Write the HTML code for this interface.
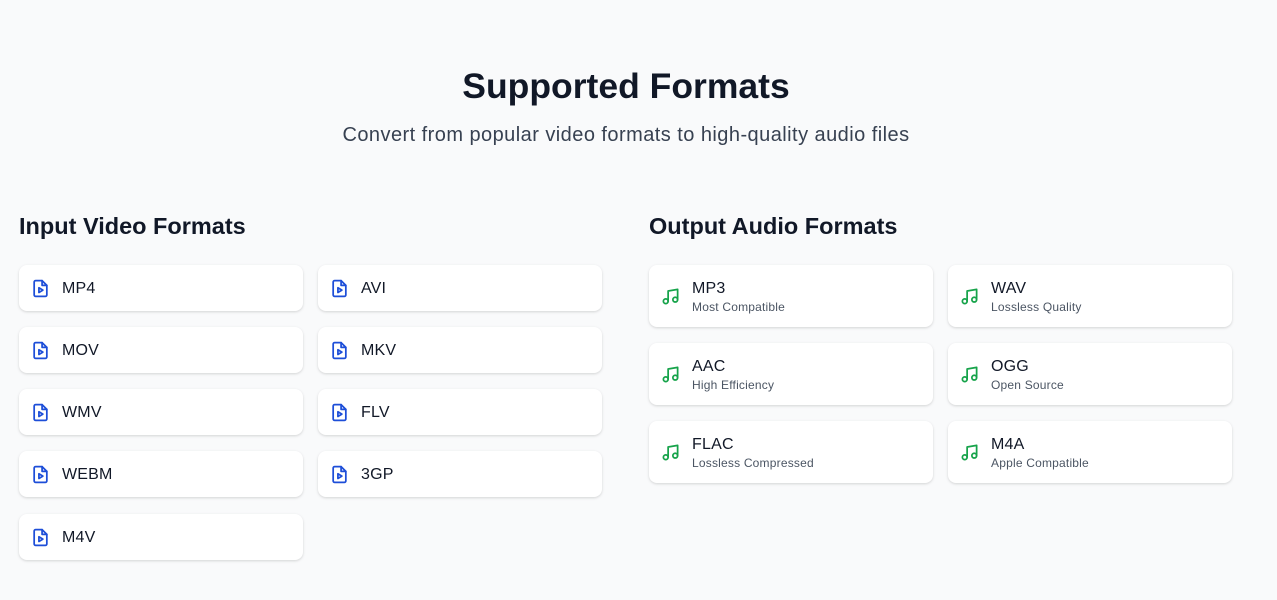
<!DOCTYPE html>
<html><head><meta charset="utf-8"><style>
*{box-sizing:border-box;margin:0;padding:0}
body{width:1277px;height:600px;background:#f9fafb;font-family:"Liberation Sans",sans-serif;color:#111827;position:relative;overflow:hidden}
h1{position:absolute;top:66px;left:0;width:1252px;text-align:center;font-size:35.5px;font-weight:700;color:#111827}
.sub{position:absolute;top:124px;left:0;width:1252px;text-align:center;font-size:20px;letter-spacing:0.45px;color:#374151}
h2{position:absolute;top:213px;font-size:23.5px;font-weight:600;color:#111827}
.card{position:absolute;width:284px;background:#fff;border-radius:8px;box-shadow:0 1px 3px rgba(0,0,0,.1),0 1px 2px rgba(0,0,0,.06);display:flex;align-items:center;padding-left:12px}
.in{height:46px}
.out{height:62px}
.card svg{flex:none;margin-right:12px}
.n{font-size:16px;color:#111827;position:relative;top:1px;letter-spacing:0.2px}
.d{font-size:12px;color:#4b5563;margin-top:3px;letter-spacing:0.2px}
</style></head><body>
<h1>Supported Formats</h1>
<div class="sub">Convert from popular video formats to high-quality audio files</div>
<h2 style="left:19px">Input Video Formats</h2>
<h2 style="left:649px">Output Audio Formats</h2>
<div class="card in" style="left:19px;top:265px"><svg width="19" height="19" viewBox="0 0 24 24" fill="none" stroke="#1d4ed8" stroke-width="2.2" stroke-linecap="round" stroke-linejoin="round"><path d="M14 2H6a2 2 0 0 0-2 2v16a2 2 0 0 0 2 2h12a2 2 0 0 0 2-2V8z"/><path d="M14 2v6h6"/><path d="M10 11l5 3-5 3z"/></svg><span class="n">MP4</span></div>
<div class="card in" style="left:318px;top:265px"><svg width="19" height="19" viewBox="0 0 24 24" fill="none" stroke="#1d4ed8" stroke-width="2.2" stroke-linecap="round" stroke-linejoin="round"><path d="M14 2H6a2 2 0 0 0-2 2v16a2 2 0 0 0 2 2h12a2 2 0 0 0 2-2V8z"/><path d="M14 2v6h6"/><path d="M10 11l5 3-5 3z"/></svg><span class="n">AVI</span></div>
<div class="card in" style="left:19px;top:327px"><svg width="19" height="19" viewBox="0 0 24 24" fill="none" stroke="#1d4ed8" stroke-width="2.2" stroke-linecap="round" stroke-linejoin="round"><path d="M14 2H6a2 2 0 0 0-2 2v16a2 2 0 0 0 2 2h12a2 2 0 0 0 2-2V8z"/><path d="M14 2v6h6"/><path d="M10 11l5 3-5 3z"/></svg><span class="n">MOV</span></div>
<div class="card in" style="left:318px;top:327px"><svg width="19" height="19" viewBox="0 0 24 24" fill="none" stroke="#1d4ed8" stroke-width="2.2" stroke-linecap="round" stroke-linejoin="round"><path d="M14 2H6a2 2 0 0 0-2 2v16a2 2 0 0 0 2 2h12a2 2 0 0 0 2-2V8z"/><path d="M14 2v6h6"/><path d="M10 11l5 3-5 3z"/></svg><span class="n">MKV</span></div>
<div class="card in" style="left:19px;top:389px"><svg width="19" height="19" viewBox="0 0 24 24" fill="none" stroke="#1d4ed8" stroke-width="2.2" stroke-linecap="round" stroke-linejoin="round"><path d="M14 2H6a2 2 0 0 0-2 2v16a2 2 0 0 0 2 2h12a2 2 0 0 0 2-2V8z"/><path d="M14 2v6h6"/><path d="M10 11l5 3-5 3z"/></svg><span class="n">WMV</span></div>
<div class="card in" style="left:318px;top:389px"><svg width="19" height="19" viewBox="0 0 24 24" fill="none" stroke="#1d4ed8" stroke-width="2.2" stroke-linecap="round" stroke-linejoin="round"><path d="M14 2H6a2 2 0 0 0-2 2v16a2 2 0 0 0 2 2h12a2 2 0 0 0 2-2V8z"/><path d="M14 2v6h6"/><path d="M10 11l5 3-5 3z"/></svg><span class="n">FLV</span></div>
<div class="card in" style="left:19px;top:451px"><svg width="19" height="19" viewBox="0 0 24 24" fill="none" stroke="#1d4ed8" stroke-width="2.2" stroke-linecap="round" stroke-linejoin="round"><path d="M14 2H6a2 2 0 0 0-2 2v16a2 2 0 0 0 2 2h12a2 2 0 0 0 2-2V8z"/><path d="M14 2v6h6"/><path d="M10 11l5 3-5 3z"/></svg><span class="n">WEBM</span></div>
<div class="card in" style="left:318px;top:451px"><svg width="19" height="19" viewBox="0 0 24 24" fill="none" stroke="#1d4ed8" stroke-width="2.2" stroke-linecap="round" stroke-linejoin="round"><path d="M14 2H6a2 2 0 0 0-2 2v16a2 2 0 0 0 2 2h12a2 2 0 0 0 2-2V8z"/><path d="M14 2v6h6"/><path d="M10 11l5 3-5 3z"/></svg><span class="n">3GP</span></div>
<div class="card in" style="left:19px;top:514px"><svg width="19" height="19" viewBox="0 0 24 24" fill="none" stroke="#1d4ed8" stroke-width="2.2" stroke-linecap="round" stroke-linejoin="round"><path d="M14 2H6a2 2 0 0 0-2 2v16a2 2 0 0 0 2 2h12a2 2 0 0 0 2-2V8z"/><path d="M14 2v6h6"/><path d="M10 11l5 3-5 3z"/></svg><span class="n">M4V</span></div>
<div class="card out" style="left:649px;top:265px"><svg width="19" height="19" viewBox="0 0 24 24" fill="none" stroke="#16a34a" stroke-width="2.2" stroke-linecap="round" stroke-linejoin="round"><path d="M9 18V5l12-2v13"/><circle cx="6" cy="18" r="3"/><circle cx="18" cy="16" r="3"/></svg><div><div class="n">MP3</div><div class="d">Most Compatible</div></div></div>
<div class="card out" style="left:948px;top:265px"><svg width="19" height="19" viewBox="0 0 24 24" fill="none" stroke="#16a34a" stroke-width="2.2" stroke-linecap="round" stroke-linejoin="round"><path d="M9 18V5l12-2v13"/><circle cx="6" cy="18" r="3"/><circle cx="18" cy="16" r="3"/></svg><div><div class="n">WAV</div><div class="d">Lossless Quality</div></div></div>
<div class="card out" style="left:649px;top:343px"><svg width="19" height="19" viewBox="0 0 24 24" fill="none" stroke="#16a34a" stroke-width="2.2" stroke-linecap="round" stroke-linejoin="round"><path d="M9 18V5l12-2v13"/><circle cx="6" cy="18" r="3"/><circle cx="18" cy="16" r="3"/></svg><div><div class="n">AAC</div><div class="d">High Efficiency</div></div></div>
<div class="card out" style="left:948px;top:343px"><svg width="19" height="19" viewBox="0 0 24 24" fill="none" stroke="#16a34a" stroke-width="2.2" stroke-linecap="round" stroke-linejoin="round"><path d="M9 18V5l12-2v13"/><circle cx="6" cy="18" r="3"/><circle cx="18" cy="16" r="3"/></svg><div><div class="n">OGG</div><div class="d">Open Source</div></div></div>
<div class="card out" style="left:649px;top:421px"><svg width="19" height="19" viewBox="0 0 24 24" fill="none" stroke="#16a34a" stroke-width="2.2" stroke-linecap="round" stroke-linejoin="round"><path d="M9 18V5l12-2v13"/><circle cx="6" cy="18" r="3"/><circle cx="18" cy="16" r="3"/></svg><div><div class="n">FLAC</div><div class="d">Lossless Compressed</div></div></div>
<div class="card out" style="left:948px;top:421px"><svg width="19" height="19" viewBox="0 0 24 24" fill="none" stroke="#16a34a" stroke-width="2.2" stroke-linecap="round" stroke-linejoin="round"><path d="M9 18V5l12-2v13"/><circle cx="6" cy="18" r="3"/><circle cx="18" cy="16" r="3"/></svg><div><div class="n">M4A</div><div class="d">Apple Compatible</div></div></div>
</body></html>
